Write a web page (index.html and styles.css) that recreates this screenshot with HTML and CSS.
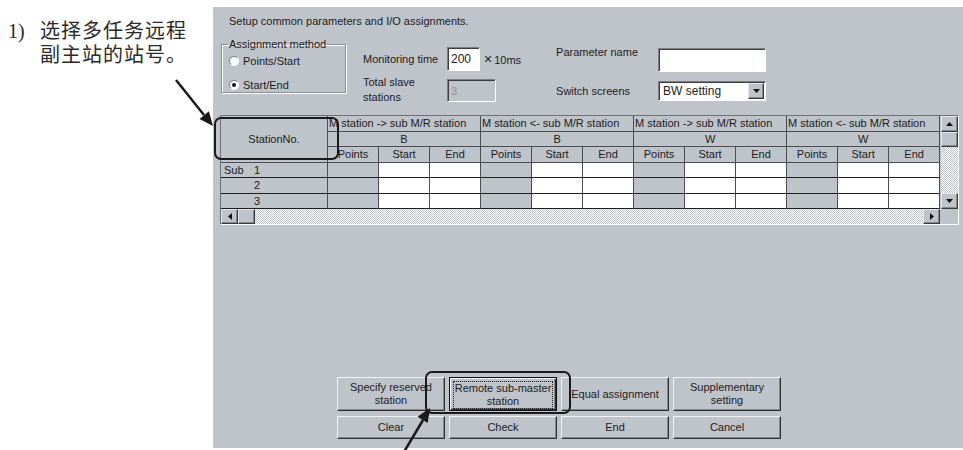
FILE: index.html
```html
<!DOCTYPE html>
<html lang="zh-CN">
<head>
  <meta charset="UTF-8">
  <meta name="viewport" content="width=device-width, initial-scale=1.0">
  <title>Remote sub-master station setting</title>
  <link rel="stylesheet" href="styles.css">
</head>
<body>
  <div class="page">
    <div class="note">
      <span class="note-num">1)</span>
      <span class="note-text">选择多任务远程<br>副主站的站号。</span>
    </div>

    <div class="dialog">
      <div class="title">Setup common parameters and I/O assignments.</div>

      <div class="settings">
        <fieldset class="group">
          <legend>Assignment method</legend>
          <div class="radio"><span class="radio-dot"></span>Points/Start</div>
          <div class="radio"><span class="radio-dot on"></span>Start/End</div>
        </fieldset>

        <div class="fields">
          <div class="field monitor">
            <span class="label">Monitoring time</span>
            <span class="edit edit-num">200</span>
            <span class="unit"><span class="times">×</span>10ms</span>
          </div>
          <div class="field total">
            <span class="label label-two">Total slave<br>stations</span>
            <span class="edit edit-off">3</span>
          </div>
        </div>

        <div class="fields fields-right">
          <div class="field param">
            <span class="label label-top">Parameter name</span>
            <span class="edit edit-name"></span>
          </div>
          <div class="field switch">
            <span class="label">Switch screens</span>
            <span class="combo">
              <span class="combo-text">BW setting</span>
              <span class="sb-btn combo-btn">
                <svg width="7" height="4" viewBox="0 0 7 4"><polygon points="0,0 7,0 3.5,4"/></svg>
              </span>
            </span>
          </div>
        </div>
      </div>

      <div class="grid">
        <table class="assign">
          <colgroup>
            <col class="c-station">
            <col><col><col><col><col><col><col><col><col><col><col><col>
          </colgroup>
          <thead>
            <tr class="r1">
              <th rowspan="3" class="station">StationNo.</th>
              <th colspan="3">M station -&gt; sub M/R station</th>
              <th colspan="3">M station &lt;- sub M/R station</th>
              <th colspan="3">M station -&gt; sub M/R station</th>
              <th colspan="3">M station &lt;- sub M/R station</th>
            </tr>
            <tr class="r2">
              <th colspan="3">B</th>
              <th colspan="3">B</th>
              <th colspan="3">W</th>
              <th colspan="3">W</th>
            </tr>
            <tr class="r3">
              <th>Points</th><th>Start</th><th>End</th>
              <th>Points</th><th>Start</th><th>End</th>
              <th>Points</th><th>Start</th><th>End</th>
              <th>Points</th><th>Start</th><th>End</th>
            </tr>
          </thead>
          <tbody>
            <tr class="r4">
              <td class="sno"><span class="sub">Sub</span><span class="no">1</span></td>
              <td class="pts"></td><td></td><td></td>
              <td class="pts"></td><td></td><td></td>
              <td class="pts"></td><td></td><td></td>
              <td class="pts"></td><td></td><td></td>
            </tr>
            <tr class="r5">
              <td class="sno"><span class="sub"></span><span class="no">2</span></td>
              <td class="pts"></td><td></td><td></td>
              <td class="pts"></td><td></td><td></td>
              <td class="pts"></td><td></td><td></td>
              <td class="pts"></td><td></td><td></td>
            </tr>
            <tr class="r6">
              <td class="sno"><span class="sub"></span><span class="no">3</span></td>
              <td class="pts"></td><td></td><td></td>
              <td class="pts"></td><td></td><td></td>
              <td class="pts"></td><td></td><td></td>
              <td class="pts"></td><td></td><td></td>
            </tr>
          </tbody>
        </table>

        <div class="vbar">
          <span class="sb-btn">
            <svg width="7" height="4" viewBox="0 0 7 4"><polygon points="0,4 7,4 3.5,0"/></svg>
          </span>
          <span class="sb-btn thumb"></span>
          <span class="track"></span>
          <span class="sb-btn">
            <svg width="7" height="4" viewBox="0 0 7 4"><polygon points="0,0 7,0 3.5,4"/></svg>
          </span>
        </div>

        <div class="hbar">
          <span class="sb-btn">
            <svg width="4" height="7" viewBox="0 0 4 7"><polygon points="4,0 4,7 0,3.5"/></svg>
          </span>
          <span class="sb-btn thumb"></span>
          <span class="track"></span>
          <span class="sb-btn">
            <svg width="4" height="7" viewBox="0 0 4 7"><polygon points="0,0 0,7 4,3.5"/></svg>
          </span>
        </div>

        <div class="corner"></div>
      </div>

      <div class="buttons">
        <button class="btn">Specify reserved<br>station</button>
        <button class="btn btn-default"><span class="focus">Remote sub-master<br>station</span></button>
        <button class="btn">Equal assignment</button>
        <button class="btn">Supplementary<br>setting</button>
        <button class="btn">Clear</button>
        <button class="btn">Check</button>
        <button class="btn">End</button>
        <button class="btn">Cancel</button>
      </div>
    </div>
  </div>

  <!-- call-outs drawn over the screenshot -->
  <svg class="marks" width="963" height="450" viewBox="0 0 963 450">
    <rect x="215" y="118" width="123" height="41" rx="6" class="ring"/>
    <rect x="426" y="372" width="144" height="41" rx="6" class="ring"/>
    <line x1="176" y1="80" x2="204" y2="115" class="stem"/>
    <polygon points="213,126 199.5,118.9 208.9,111.3" class="head"/>
    <line x1="404" y1="452" x2="423" y2="420" class="stem"/>
    <polygon points="430,408 427.7,423.1 417.5,416.7" class="head"/>
  </svg>
</body>
</html>
```

FILE: styles.css
```css
body {
  margin: 0;
  background-color: #fff;
  font-family: "Liberation Sans", Arial, sans-serif;
  font-size: 11px;
  color: #1c1c1c;
}

.page {
  display: flex;
  height: 450px;
  overflow: hidden;
}

/* annotation on the left */
.note {
  width: 213px;
  flex: none;
  display: flex;
  padding: 19px 0 0 8px;
  box-sizing: border-box;
  font-family: "Liberation Serif", "Noto Sans CJK SC", serif;
  font-size: 20px;
  line-height: 24px;
  color: #2a2a2a;
}
.note-num {
  width: 32px;
  flex: none;
}
.note-text {
  letter-spacing: 1px;
}

/* dialog */
.dialog {
  flex: 1;
  margin-top: 7px;
  height: 441px;
  background-color: #bfc3ca;
}
.title {
  padding: 8px 0 0 16px;
  line-height: 13px;
  height: 13px;
}

.settings {
  display: flex;
  margin-top: 10px;
  height: 66px;
}

.group {
  margin: 0 0 0 8px;
  padding: 3px 0 0 7px;
  width: 116px;
  height: 50px;
  border: 1px solid #8a8d93;
  box-shadow: 1px 1px 0 #fff, inset 1px 1px 0 #fff;
}
.group legend {
  padding: 0 1px;
  margin-left: -1px;
  line-height: 13px;
}
.radio {
  display: flex;
  align-items: center;
  height: 14px;
  margin-bottom: 10px;
}
.radio-dot {
  width: 8px;
  height: 8px;
  margin-right: 4px;
  border-radius: 50%;
  border: 1px solid;
  border-color: #7c7f85 #fff #fff #7c7f85;
  background-color: #fff;
  display: flex;
  align-items: center;
  justify-content: center;
}
.radio-dot.on::after {
  content: "";
  width: 4px;
  height: 4px;
  border-radius: 50%;
  background-color: #111;
}

.fields {
  margin: 9px 0 0 17px;
  display: flex;
  flex-direction: column;
  gap: 8px;
}
.fields-right {
  margin: 10px 0 0 35px;
  gap: 9px;
}
.field {
  display: flex;
  align-items: center;
}
.field.total {
  align-items: flex-start;
}
.label {
  width: 84px;
  line-height: 14px;
}
.label-two {
  margin-top: -4px;
  line-height: 15px;
}
.fields-right .label {
  width: 102px;
}
.label-top {
  align-self: flex-start;
  margin-top: -3px;
}

.edit {
  box-sizing: border-box;
  background-color: #fff;
  border: 1px solid;
  border-color: #7c7f85 #fff #fff #7c7f85;
  box-shadow: inset 1px 1px 0 #3c3c3c;
  padding: 0 3px;
  display: flex;
  align-items: center;
}
.edit-num {
  width: 33px;
  height: 24px;
  font-size: 12px;
}
.edit-off {
  width: 49px;
  height: 23px;
  background-color: #bfc3ca;
  color: #8e9197;
}
.edit-name {
  width: 108px;
  height: 24px;
}
.unit {
  margin-left: 4px;
}
.times {
  font-size: 14px;
  margin-right: 2px;
}

.combo {
  box-sizing: border-box;
  width: 108px;
  height: 20px;
  background-color: #fff;
  border: 1px solid;
  border-color: #7c7f85 #fff #fff #7c7f85;
  box-shadow: inset 1px 1px 0 #3c3c3c;
  display: flex;
  align-items: center;
  padding: 1px 1px 1px 4px;
}
.combo-text {
  flex: 1;
  font-size: 12px;
}
.combo-btn {
  width: 16px;
  height: 16px;
}

/* classic 3d face used by scroll buttons */
.sb-btn {
  box-sizing: border-box;
  display: flex;
  align-items: center;
  justify-content: center;
  background-color: #bfc3ca;
  border: 1px solid;
  border-color: #e6e8eb #3a3a3a #3a3a3a #e6e8eb;
  box-shadow: inset -1px -1px 0 #85888e;
}
.sb-btn svg {
  fill: #111;
}

/* station table */
.grid {
  margin: 11px 5px 0 7px;
  border: 1px solid #6e7177;
  border-right-color: #fff;
  border-bottom-color: #fff;
  box-shadow: inset 1px 1px 0 #3c3c3c;
  display: grid;
  grid-template-columns: 719px 18px;
  grid-template-rows: 93px 15px;
}
.assign {
  width: 719px;
  table-layout: fixed;
  border-collapse: separate;
  border-spacing: 0;
}
.assign col {
  width: 51px;
}
.assign col.c-station {
  width: 107px;
}
.assign th,
.assign td {
  padding: 0;
  font-weight: normal;
  text-align: center;
  line-height: 13px;
  white-space: nowrap;
  overflow: hidden;
  border-right: 1px solid #4a4d52;
  border-bottom: 1px solid #4a4d52;
}
.assign th {
  background-color: #bfc3ca;
}
.assign .r1 th:not(.station) {
  text-align: left;
  padding-left: 1px;
}
.assign .r1 { height: 16px; }
.assign .r2 { height: 15px; }
.assign .r3 { height: 16px; }
.assign .r4 { height: 15px; }
.assign .r5 { height: 16px; }
.assign .r6 { height: 15px; }
.assign td {
  background-color: #fff;
  border-bottom-color: #1e1e1e;
}
.assign td.sno,
.assign td.pts {
  background-color: #bfc3ca;
}
.assign td.sno {
  text-align: left;
}
.sub {
  display: inline-block;
  width: 30px;
  padding-left: 3px;
}
.no {
  display: inline-block;
}

.vbar {
  display: flex;
  flex-direction: column;
  border-left: 1px solid #bfc3ca;
}
.vbar .sb-btn {
  height: 16px;
}
.vbar .thumb {
  height: 15px;
}
.hbar {
  display: flex;
}
.hbar .sb-btn {
  width: 17px;
}
.track {
  flex: 1;
  background: repeating-conic-gradient(#fff 0 25%, #bfc3ca 0 50%) 0 0 / 2px 2px;
}
.corner {
  background-color: #bfc3ca;
}

/* command buttons */
.buttons {
  margin: 152px 0 0 124px;
  display: grid;
  grid-template-columns: repeat(4, 108px);
  grid-template-rows: 34px 23px;
  column-gap: 4px;
  row-gap: 5px;
}
.btn {
  font-family: inherit;
  font-size: 11px;
  line-height: 13px;
  color: #1c1c1c;
  padding: 0;
  background-color: #bfc3ca;
  border: 1px solid;
  border-color: #f2f3f5 #2e2e2e #2e2e2e #f2f3f5;
  box-shadow: inset -1px -1px 0 #85888e;
}
.btn-default {
  border-color: #111;
  box-shadow: inset 1px 1px 0 #f2f3f5, inset -1px -1px 0 #2e2e2e, inset -2px -2px 0 #85888e;
  padding: 3px;
}
.focus {
  display: flex;
  align-items: center;
  justify-content: center;
  height: 100%;
  border: 1px dotted #222;
}

/* call-out marks */
.marks {
  position: absolute;
  left: 0;
  top: 0;
  pointer-events: none;
}
.ring {
  fill: none;
  stroke: #1a1a1a;
  stroke-width: 2;
}
.stem {
  stroke: #1a1a1a;
  stroke-width: 2.5;
}
.head {
  fill: #1a1a1a;
}
```
